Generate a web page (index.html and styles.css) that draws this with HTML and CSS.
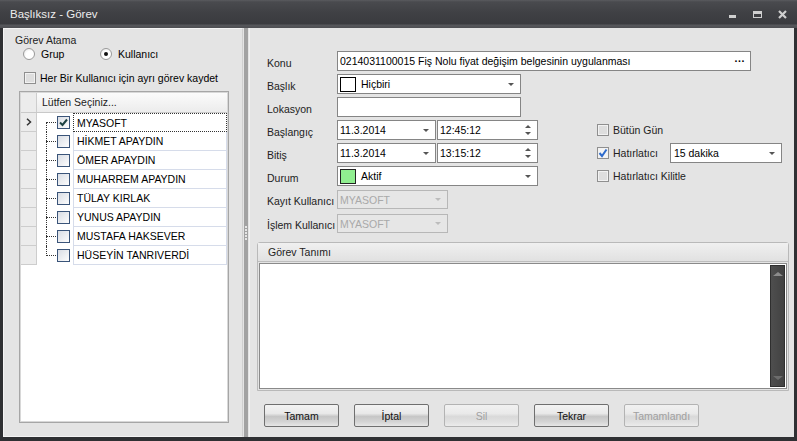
FILE: index.html
```html
<!DOCTYPE html>
<html lang="tr">
<head>
    <meta charset="UTF-8">
    <title>Başlıksız - Görev</title>
    <link rel="stylesheet" href="styles.css">
</head>
<body>
<div class="window">
    <div class="titlebar">
        <span class="title">Başlıksız - Görev</span>
        <svg class="controls" width="60" height="28" viewBox="0 0 60 28">
            <rect x="1" y="15" width="7" height="3" fill="#cfcfcf"/>
            <rect x="25.5" y="11.5" width="8" height="6" fill="none" stroke="#cfcfcf"/>
            <rect x="25" y="11" width="9" height="3" fill="#cfcfcf"/>
            <path d="M51 11 L58 18 M58 11 L51 18" stroke="#cfcfcf" stroke-width="2.2"/>
        </svg>
    </div>

    <div class="main">
        <!-- sol panel: kullanici secimi -->
        <div class="left">
            <div class="group-title">Görev Atama</div>
            <div class="radio-row">
                <label class="radio grup"><span class="rb"></span>Grup</label>
                <label class="radio kul"><span class="rb on"></span>Kullanıcı</label>
            </div>
            <label class="check-row"><span class="cb"></span>Her Bir Kullanıcı için ayrı görev kaydet</label>

            <div class="tree">
                <div class="tree-head">
                    <div class="ind"></div>
                    <div class="head-text">Lütfen Seçiniz...</div>
                </div>
                <div class="tree-row first focus">
                    <div class="ind"><svg width="6" height="8" viewBox="0 0 6 8"><path d="M1 0.8 L4.5 4 L1 7.2" fill="none" stroke="#333" stroke-width="1.5"/></svg></div>
                    <div class="tc"><span class="tcb checked"><svg width="11" height="11" viewBox="0 0 11 11"><path d="M2 5.5 L4.5 8 L9 2.5" fill="none" stroke="#1d4242" stroke-width="2"/></svg></span></div>
                    <div class="name">MYASOFT</div>
                </div>
                <div class="tree-row">
                    <div class="ind"></div>
                    <div class="tc"><span class="tcb"></span></div>
                    <div class="name">HİKMET APAYDIN</div>
                </div>
                <div class="tree-row">
                    <div class="ind"></div>
                    <div class="tc"><span class="tcb"></span></div>
                    <div class="name">ÖMER APAYDIN</div>
                </div>
                <div class="tree-row">
                    <div class="ind"></div>
                    <div class="tc"><span class="tcb"></span></div>
                    <div class="name">MUHARREM APAYDIN</div>
                </div>
                <div class="tree-row">
                    <div class="ind"></div>
                    <div class="tc"><span class="tcb"></span></div>
                    <div class="name">TÜLAY KIRLAK</div>
                </div>
                <div class="tree-row">
                    <div class="ind"></div>
                    <div class="tc"><span class="tcb"></span></div>
                    <div class="name">YUNUS APAYDIN</div>
                </div>
                <div class="tree-row">
                    <div class="ind"></div>
                    <div class="tc"><span class="tcb"></span></div>
                    <div class="name">MUSTAFA HAKSEVER</div>
                </div>
                <div class="tree-row last">
                    <div class="ind"></div>
                    <div class="tc"><span class="tcb"></span></div>
                    <div class="name">HÜSEYİN TANRIVERDİ</div>
                </div>
            </div>
        </div>

        <div class="splitter"><span class="grip"></span></div>

        <!-- sag panel: gorev detaylari -->
        <div class="right">
            <div class="form">
                <div class="row r-konu">
                    <span class="lbl">Konu</span>
                    <div class="field w-konu">0214031100015 Fiş Nolu fiyat değişim belgesinin uygulanması<span class="dots">···</span></div>
                </div>
                <div class="row">
                    <span class="lbl">Başlık</span>
                    <div class="field w-184"><span class="swatch"></span>Hiçbiri<span class="arrow"></span></div>
                </div>
                <div class="row">
                    <span class="lbl">Lokasyon</span>
                    <div class="field w-184"></div>
                </div>
                <div class="row">
                    <span class="lbl">Başlangıç</span>
                    <div class="field w-date">11.3.2014<span class="arrow"></span></div>
                    <div class="field w-time">12:45:12<span class="spin"><i class="up"></i><i class="down"></i></span></div>
                    <label class="opt"><span class="cb"></span>Bütün Gün</label>
                </div>
                <div class="row">
                    <span class="lbl">Bitiş</span>
                    <div class="field w-date">11.3.2014<span class="arrow"></span></div>
                    <div class="field w-time">13:15:12<span class="spin"><i class="up"></i><i class="down"></i></span></div>
                    <label class="opt"><span class="cb checked"><svg width="10" height="10" viewBox="0 0 10 10"><path d="M1.5 5 L4 8 L8.5 1.5" fill="none" stroke="#2f6ccc" stroke-width="2"/></svg></span>Hatırlatıcı</label>
                    <div class="field w-remind">15 dakika<span class="arrow"></span></div>
                </div>
                <div class="row r-durum">
                    <span class="lbl">Durum</span>
                    <div class="field w-durum"><span class="swatch green"></span>Aktif<span class="arrow"></span></div>
                    <label class="opt"><span class="cb"></span>Hatırlatıcı Kilitle</label>
                </div>
                <div class="row r-kayit">
                    <span class="lbl">Kayıt Kullanıcı</span>
                    <div class="field disabled">MYASOFT<span class="arrow"></span></div>
                </div>
                <div class="row r-islem">
                    <span class="lbl">İşlem Kullanıcı</span>
                    <div class="field disabled">MYASOFT<span class="arrow"></span></div>
                </div>
            </div>

            <div class="desc">
                <div class="desc-head">Görev Tanımı</div>
                <div class="desc-body">
                    <div class="scroll">
                        <span class="s-up"></span>
                        <span class="s-down"></span>
                    </div>
                </div>
            </div>

            <div class="buttons">
                <button class="btn">Tamam</button>
                <button class="btn">İptal</button>
                <button class="btn" disabled>Sil</button>
                <button class="btn">Tekrar</button>
                <button class="btn" disabled>Tamamlandı</button>
            </div>
        </div>
    </div>
</div>
</body>
</html>
```

FILE: styles.css
```css
* {
    box-sizing: border-box;
}
body {
    margin: 0;
    width: 797px;
    height: 441px;
    overflow: hidden;
    background: #2f3033;
    font-family: "Liberation Sans", Arial, sans-serif;
    font-size: 10.5px;
    color: #000;
}
.window {
    width: 797px;
    height: 441px;
    display: flex;
    flex-direction: column;
}

/* title bar */
.titlebar {
    height: 28px;
    display: flex;
    align-items: center;
    padding-left: 10px;
    color: #ededed;
    font-size: 11.5px;
    background: linear-gradient(#5a5b5f 0, #494a4e 2px, #404145 12px, #3a3b3f 24px, #57585c 25px, #4d4e52 28px);
}
.title {
    flex: 1;
}
.controls {
    margin-right: 9px;
}

.main {
    height: 409px;
    margin: 0 3px;
    display: flex;
    background: #e4e4e4;
}

/* left */
.left {
    width: 241px;
    border: 1px solid #f4f4f4;
    border-right-color: #cfcfcf;
    padding-left: 11px;
}
.group-title {
    margin-top: 5px;
    height: 13px;
    line-height: 13px;
    color: #222;
}
.radio-row {
    display: flex;
    height: 13px;
    align-items: center;
}
.radio {
    display: flex;
    align-items: center;
}
.radio.grup {
    margin-left: 8px;
    width: 77px;
}
.rb {
    width: 12px;
    height: 12px;
    border-radius: 50%;
    border: 1px solid #9a9a9a;
    background: radial-gradient(circle at 60% 60%, #fff 45%, #dedede 100%);
    margin-right: 6px;
    display: flex;
    align-items: center;
    justify-content: center;
}
.rb.on::after {
    content: "";
    width: 4px;
    height: 4px;
    border-radius: 50%;
    background: #111;
}
.check-row {
    display: flex;
    align-items: center;
    height: 13px;
    margin: 11px 0 0 9px;
}
.cb {
    width: 12px;
    height: 12px;
    border: 1px solid #8f8f8f;
    background: #dedede;
    box-shadow: inset 0 0 0 1px #f2f2f2;
    margin-right: 4px;
    display: flex;
    align-items: center;
    justify-content: center;
}
.cb.checked {
    background: #f4f4f4;
}

/* tree list */
.tree {
    margin: 7px 0 0 4px;
    width: 210px;
    height: 332px;
    border: 1px solid #a6a6a6;
    box-shadow: inset 0 0 0 1px #d8d8d8;
    background: #fff;
    padding: 1px;
}
.tree-head {
    display: flex;
    height: 20px;
    border-bottom: 1px solid #c9c9c9;
    background: linear-gradient(#fbfbfb, #ececec);
}
.tree-head .ind {
    border-bottom: none;
}
.head-text {
    padding-left: 5px;
    line-height: 19px;
    color: #222;
}
.tree-row {
    display: flex;
    height: 19px;
}
.ind {
    width: 16px;
    flex: none;
    background: #ececec;
    border-right: 1px solid #cdcdcd;
    border-bottom: 1px solid #cdcdcd;
    display: flex;
    align-items: center;
    justify-content: center;
}
.tc {
    width: 36px;
    flex: none;
    position: relative;
    display: flex;
    align-items: center;
}
.tc::before {
    content: "";
    position: absolute;
    left: 9px;
    top: 9px;
    width: 10px;
    border-top: 1px dotted #333;
}
.tc::after {
    content: "";
    position: absolute;
    left: 9px;
    top: 0;
    height: 19px;
    border-left: 1px dotted #333;
}
.first .tc::after {
    top: 9px;
    height: 10px;
}
.last .tc::after {
    height: 10px;
}
.tcb {
    margin-left: 20px;
    width: 13px;
    height: 13px;
    border: 1px solid #3a5479;
    background: linear-gradient(135deg, #d9dde4, #fdfdfd);
    display: flex;
    align-items: center;
    justify-content: center;
}
.name {
    flex: 1;
    padding-left: 3px;
    line-height: 18px;
    border-left: 1px solid #d6dcea;
    border-bottom: 1px solid #d6dcea;
    border-right: 1px solid #d6dcea;
    white-space: nowrap;
}
.focus .name {
    border: 1px dotted #333;
}

/* splitter */
.splitter {
    width: 6px;
    padding: 0 1px;
    display: flex;
}
.splitter .grip {
    flex: 1;
    background: #a2a2a2;
    display: flex;
    align-items: center;
    justify-content: center;
}
.splitter .grip::after {
    content: "";
    width: 2px;
    height: 14px;
    background: repeating-linear-gradient(#e6e6e6 0 2px, transparent 2px 3px);
}

/* right */
.right {
    flex: 1;
    padding: 23px 5px 0 7px;
    border-left: 1px solid #f2f2f2;
}
.form {
    padding-left: 10px;
}
.row {
    display: flex;
    align-items: center;
    height: 20px;
    margin-bottom: 3px;
}
.r-durum {
    margin-top: 1px;
    margin-bottom: 4px;
}
.r-kayit {
    height: 19px;
    margin-bottom: 5px;
}
.r-islem {
    height: 19px;
}
.lbl {
    width: 70px;
    flex: none;
    color: #222;
    padding-top: 3px;
    white-space: nowrap;
}
.field {
    height: 20px;
    border: 1px solid #858585;
    background: #fff;
    display: flex;
    align-items: center;
    padding-left: 2px;
    white-space: nowrap;
}
.w-konu {
    width: 414px;
}
.w-184 {
    width: 184px;
}
.w-date {
    width: 99px;
}
.w-time {
    width: 101px;
    margin-left: 1px;
}
.w-durum {
    width: 201px;
}
.w-remind {
    width: 112px;
    margin-left: 12px;
    padding-left: 3px;
}
.disabled {
    width: 111px;
    height: 19px;
    background: #e6e6e6;
    border-color: #b7b7b7;
    color: #a9a9a9;
}
.disabled .arrow {
    border-top-color: #bcbcbc;
}
.arrow {
    margin-left: auto;
    margin-right: 6px;
    width: 0;
    height: 0;
    border-left: 3px solid transparent;
    border-right: 3px solid transparent;
    border-top: 3px solid #555;
}
.spin {
    margin-left: auto;
    margin-right: 6px;
    display: flex;
    flex-direction: column;
    gap: 4px;
}
.spin i {
    width: 0;
    height: 0;
    border-left: 3px solid transparent;
    border-right: 3px solid transparent;
}
.spin .up {
    border-bottom: 3px solid #555;
}
.spin .down {
    border-top: 3px solid #555;
}
.dots {
    margin-left: auto;
    margin-right: 5px;
    font-weight: bold;
    letter-spacing: 0;
}
.swatch {
    width: 16px;
    height: 15px;
    border: 1px solid #000;
    background: #fff;
    margin-right: 5px;
}
.swatch.green {
    background: #90ee90;
    border-color: #222;
}
.opt {
    display: flex;
    align-items: center;
    margin-left: 59px;
    color: #222;
    white-space: nowrap;
}
.opt .cb {
    margin-right: 4px;
}

/* description */
.desc {
    margin-top: 9px;
    width: 532px;
    height: 149px;
    border: 1px solid #b9b9b9;
    border-radius: 3px 3px 0 0;
    display: flex;
    flex-direction: column;
}
.desc-head {
    height: 19px;
    line-height: 18px;
    padding-left: 10px;
    color: #222;
    background: linear-gradient(#f0f0f0, #e1e1e1);
    border-bottom: 1px solid #bdbdbd;
}
.desc-body {
    flex: 1;
    margin: 1px;
    border: 1px solid #8a8a8a;
    background: #fff;
    display: flex;
    justify-content: flex-end;
    padding: 1px;
}
.scroll {
    width: 15px;
    background: linear-gradient(90deg, #4e4e4e, #424242);
    border: 1px solid #2f2f2f;
    display: flex;
    flex-direction: column;
    justify-content: space-between;
    align-items: center;
    padding: 6px 0;
}
.s-up, .s-down {
    width: 0;
    height: 0;
    border-left: 5px solid transparent;
    border-right: 5px solid transparent;
}
.s-up {
    border-bottom: 4px solid #8c8c8c;
}
.s-down {
    border-top: 4px solid #6c6c6c;
}

/* buttons */
.buttons {
    display: flex;
    gap: 15px;
    margin: 13px 0 0 7px;
}
.btn {
    width: 75px;
    height: 23px;
    padding: 0;
    border: 1px solid #6f6f6f;
    border-radius: 2px;
    font-family: inherit;
    font-size: 10.5px;
    color: #111;
    background: linear-gradient(#f3f3f3 0%, #e9e9e9 40%, #c6c6c6 55%, #d4d4d4 80%, #e6e6e6 100%);
}
.btn:disabled {
    border-color: #b3b3b3;
    color: #a0a0a0;
    background: linear-gradient(#f1f1f1 0%, #eaeaea 40%, #d9d9d9 55%, #e1e1e1 80%, #ebebeb 100%);
}
```
